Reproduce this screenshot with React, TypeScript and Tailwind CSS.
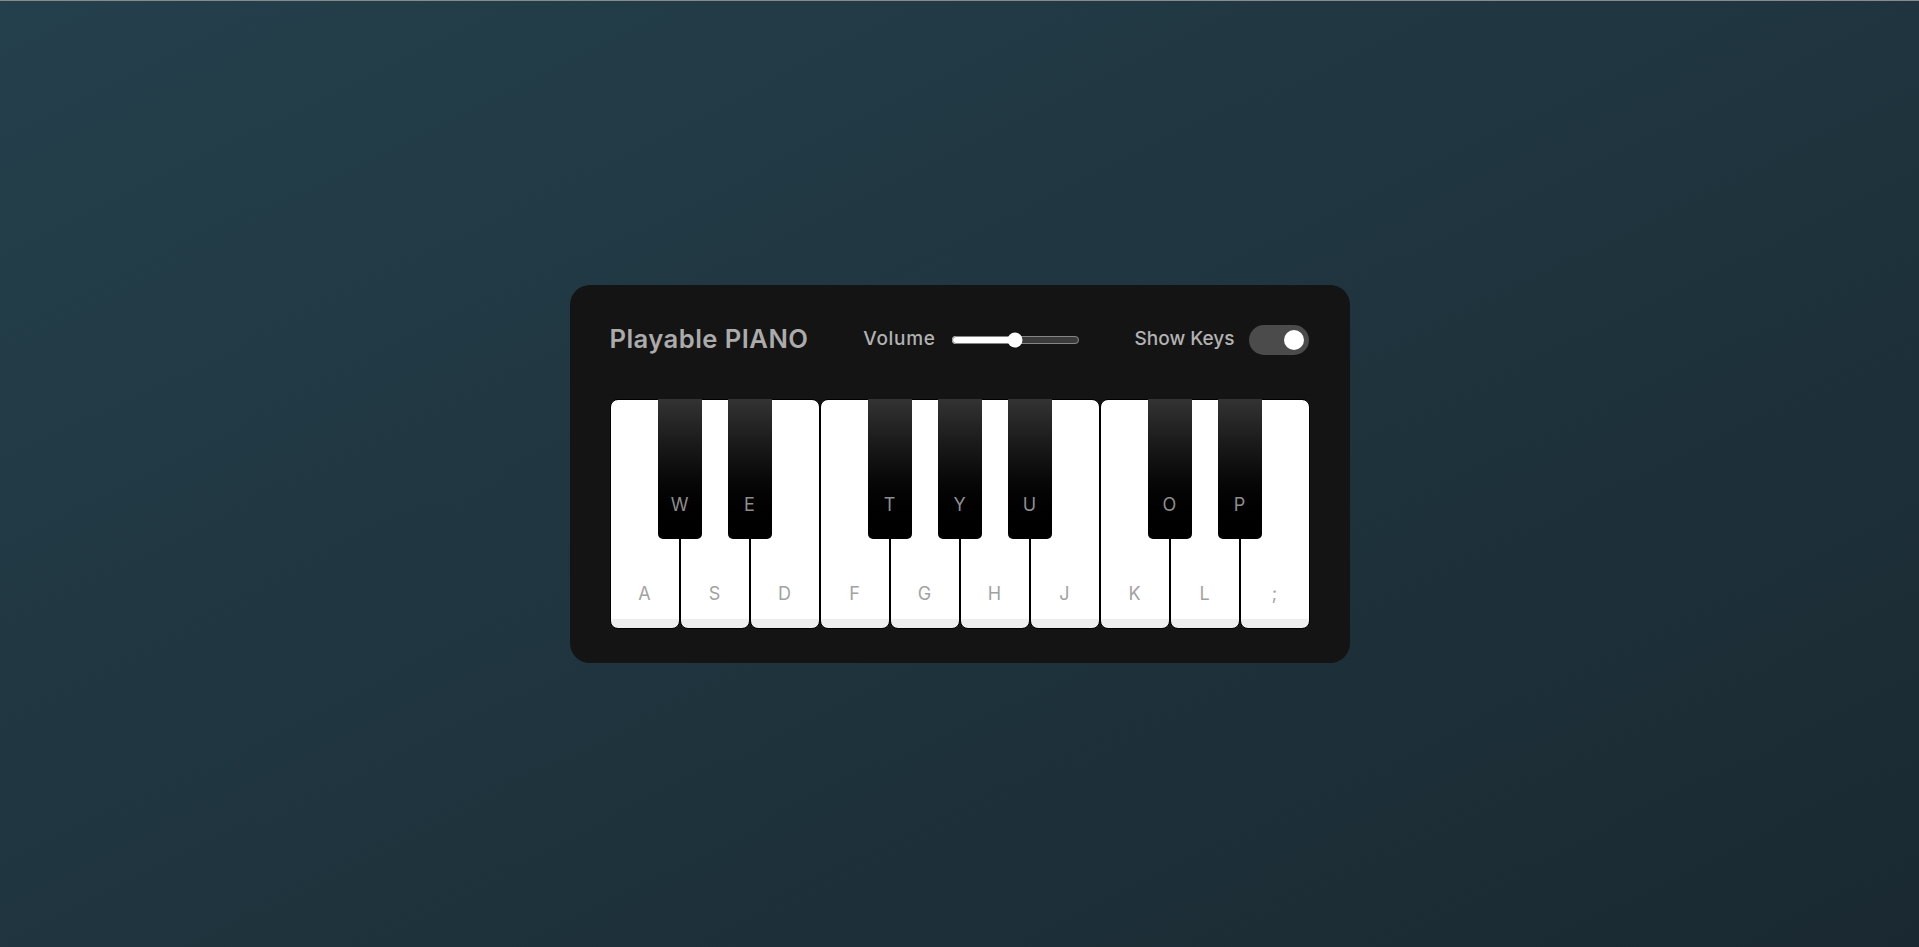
import { useState } from 'react'

type PianoKey = {
  label: string
  black?: boolean
}

const keys: PianoKey[] = [
  { label: 'a' },
  { label: 'w', black: true },
  { label: 's' },
  { label: 'e', black: true },
  { label: 'd' },
  { label: 'f' },
  { label: 't', black: true },
  { label: 'g' },
  { label: 'y', black: true },
  { label: 'h' },
  { label: 'u', black: true },
  { label: 'j' },
  { label: 'k' },
  { label: 'o', black: true },
  { label: 'l' },
  { label: 'p', black: true },
  { label: ';' },
]

const Key = ({ label, black, showKeys }: PianoKey & { showKeys: boolean }) => {
  if (black) {
    return (
      <div className="relative z-10 mx-[-22px] flex h-[140px] w-[44px] shrink-0 cursor-pointer flex-col justify-end rounded-b-[5px] bg-linear-to-b from-[#333333] to-[#000000] pb-[21px] select-none">
        {showKeys && (
          <span className="text-center text-[18px] leading-[27px] uppercase text-[#8e8e8e]">
            {label}
          </span>
        )}
      </div>
    )
  }
  return (
    <div className="flex h-[230px] w-[70px] shrink-0 cursor-pointer flex-col justify-end rounded-[8px] border border-black bg-[linear-gradient(#ffffff_96%,#eeeeee_4%)] pb-[21px] select-none">
      {showKeys && (
        <span className="text-center text-[18px] leading-[27px] uppercase text-[#a2a2a2]">
          {label}
        </span>
      )}
    </div>
  )
}

export default function App() {
  const [volume, setVolume] = useState(50)
  const [showKeys, setShowKeys] = useState(true)

  return (
    <div className="flex min-h-[947px] items-center justify-center bg-linear-to-br from-[#24404c] to-[#1a2931] font-['Inter',sans-serif] shadow-[inset_0_1px_0_#8a8a8a]">
      <div className="rounded-[20px] bg-[#141414] px-[40px] pt-[35px] pb-[34px]">
        <header className="flex h-[40px] items-center justify-between text-[#b2b2b2]">
          <h2 className="text-[25.6px] font-semibold tracking-[0.45px] text-[#ababab]">
            Playable PIANO
          </h2>
          <div className="flex items-center">
            <span className="mr-[15px] text-[19px] font-medium tracking-[0.7px]">Volume</span>
            <input
              type="range"
              min={0}
              max={100}
              value={volume}
              onChange={(e) => setVolume(Number(e.target.value))}
              className="accent-white"
            />
          </div>
          <div className="flex items-center">
            <span className="mr-[15px] text-[19px] font-medium">Show Keys</span>
            <button
              onClick={() => setShowKeys(!showKeys)}
              className={
                showKeys
                  ? 'flex h-[30px] w-[60px] items-center rounded-full bg-[#4b4b4b] pl-[35px]'
                  : 'flex h-[30px] w-[60px] items-center rounded-full bg-[#4b4b4b] pl-[5px]'
              }
            >
              <span
                className={
                  showKeys
                    ? 'h-[20px] w-[20px] rounded-full bg-white'
                    : 'h-[20px] w-[20px] rounded-full bg-[#8c8c8c]'
                }
              />
            </button>
          </div>
        </header>
        <div className="mt-[39px] flex">
          {keys.map((k) => (
            <Key key={k.label} {...k} showKeys={showKeys} />
          ))}
        </div>
      </div>
    </div>
  )
}
